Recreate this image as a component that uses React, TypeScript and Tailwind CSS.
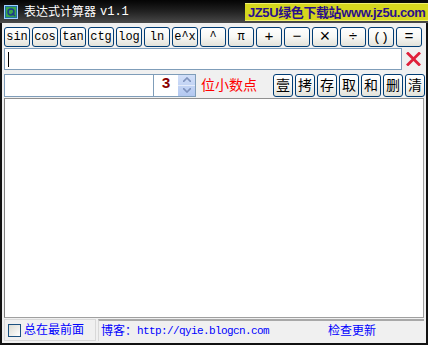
import React from 'react';

const mono = { fontFamily: '"Liberation Mono", "Noto Sans CJK SC", monospace' };
const cjk = { fontFamily: '"Liberation Sans", "Noto Sans CJK SC", sans-serif' };

const funcKeys = ['sin', 'cos', 'tan', 'ctg', 'log', 'ln', 'e^x', '^', 'π', '+', '−', '×', '÷', '()', '='];
const keySize: Record<string, string> = {
  '+': 'text-[15px]',
  '−': 'text-[15px]',
  '×': 'text-[18px] font-light',
  '÷': 'text-[15px]',
  '()': 'text-[13px]',
  '=': 'text-[15px]',
};
const memKeys = ['壹', '拷', '存', '取', '和', '删', '清'];

// XP 风格按钮
function XpButton({ label, className, font }: { label: string; className: string; font: React.CSSProperties }) {
  return (
    <button
      style={font}
      className={`flex items-center justify-center rounded-[3px] border border-[#003c74] bg-linear-to-b from-white via-[#f7f7f4] to-[#e2e2da] text-black ${className}`}
    >
      {label}
    </button>
  );
}

export default function App() {
  return (
    <div className="w-[428px] h-[345px] bg-[#111] flex flex-col overflow-hidden">
      {/* 标题栏 */}
      <div className="h-[23px] flex items-center bg-linear-to-b from-[#050505] via-[#222] to-[#4a4a4a] relative">
        <svg className="ml-[4px] w-[14px] h-[14px]" viewBox="0 0 14 14">
          <rect x="0.5" y="0.5" width="13" height="13" fill="#1f6f9f" stroke="#9fd0ff" />
          <rect x="2" y="2" width="10" height="10" fill="#3aa54a" />
          <circle cx="7" cy="7" r="3" fill="none" stroke="#1c3c8c" strokeWidth="1.5" />
          <path d="M8 8l3 3" stroke="#1c3c8c" strokeWidth="1.5" />
        </svg>
        <span className="ml-[6px] text-white text-[12px] leading-none" style={cjk}>表达式计算器</span>
        <span className="ml-[4px] text-white text-[12px] leading-none" style={mono}>v1.1</span>

        {/* 水印 */}
        <div className="absolute left-[245px] top-[3px] w-[183px] h-[18px] bg-[#d6d61e] border-y border-[#f0f070] flex items-center pl-[3px] font-bold text-[13px] tracking-[-0.4px] leading-none text-[#2a0f8c] whitespace-nowrap" style={cjk}>
          <span>JZ5U</span>
          <span>绿色下载站</span>
          <span>www.jz5u.com</span>
        </div>
      </div>

      {/* 主体 */}
      <div className="flex-1 mx-[2px] mb-[2px] bg-[#f0f0f0] flex flex-col px-[2px] pt-[4px]">
        {/* 函数按钮 */}
        <div className="flex gap-[2px] h-[20px]">
          {funcKeys.map((k) => (
            <XpButton
              key={k}
              label={k}
              font={mono}
              className={`w-[26px] h-[20px] leading-none ${keySize[k] || 'text-[12px]'}`}
            />
          ))}
        </div>

        {/* 表达式输入 */}
        <div className="flex items-center mt-[1px] h-[22px]">
          <div className="w-[398px] h-[22px] bg-white border border-[#7f9db9] flex items-center pl-[3px]">
            <div className="w-[1px] h-[15px] bg-black" />
          </div>
          <svg className="ml-[4px] w-[15px] h-[14px]" viewBox="0 0 15 14">
            <path d="M2 1.5L13 12.5M13 1.5L2 12.5" stroke="#e0203a" strokeWidth="2.8" strokeLinecap="square" />
          </svg>
        </div>

        {/* 结果 / 小数位 / 存储按钮 */}
        <div className="flex items-center mt-[3px] h-[24px]">
          <div className="flex h-[23px] border border-[#7f9db9] bg-white">
            <div className="w-[148px]" />
            <div className="w-[25px] border-l border-[#7f9db9] flex items-center justify-center font-bold text-[15px] text-[#8b0000]" style={mono}>
              3
            </div>
            <div className="w-[17px] flex flex-col bg-linear-to-b from-[#d2dff8] to-[#b3c8f0]">
              <div className="flex-1 flex items-center justify-center border-b border-[#e4ecfa]">
                <svg width="8" height="5" viewBox="0 0 8 5"><path d="M0 5L4 1L8 5" fill="none" stroke="#7f93bd" strokeWidth="1.6" /></svg>
              </div>
              <div className="flex-1 flex items-center justify-center">
                <svg width="8" height="5" viewBox="0 0 8 5"><path d="M0 0L4 4L8 0" fill="none" stroke="#7f93bd" strokeWidth="1.6" /></svg>
              </div>
            </div>
          </div>
          <span className="ml-[5px] text-[14px] text-[#ff0000] leading-none" style={cjk}>位小数点</span>
          <div className="ml-auto flex gap-[2px] mr-[-1px]">
            {memKeys.map((k) => (
              <XpButton key={k} label={k} font={cjk} className="w-[20px] h-[23px] text-[14px] leading-none" />
            ))}
          </div>
        </div>

        {/* 结果区 */}
        <div className="mt-[1px] h-[220px] bg-white border border-[#a0a0a0] border-l-[#808080] border-t-[#909090]" />

        {/* 状态栏 */}
        <div className="flex h-[22px] mt-[1px] text-[12px] text-[#0000ff] leading-none">
          <div className="w-[92px] flex items-center border border-[#d8d8d8] pl-[3px]">
            <div className="w-[13px] h-[13px] border border-[#1c5180] bg-linear-to-br from-[#dcdcd4] to-white" />
            <span className="ml-[3px]" style={cjk}>总在最前面</span>
          </div>
          <div className="flex-1 ml-[2px] flex items-center border-t-2 border-[#a8a8a8] border-l border-l-[#d8d8d8] pl-[2px]">
            <span style={cjk}>博客：</span>
            <span className="text-[11px] tracking-[-0.6px]" style={mono}>http://qyie.blogcn.com</span>
            <span className="ml-[59px]" style={cjk}>检查更新</span>
          </div>
        </div>
      </div>
    </div>
  );
}
